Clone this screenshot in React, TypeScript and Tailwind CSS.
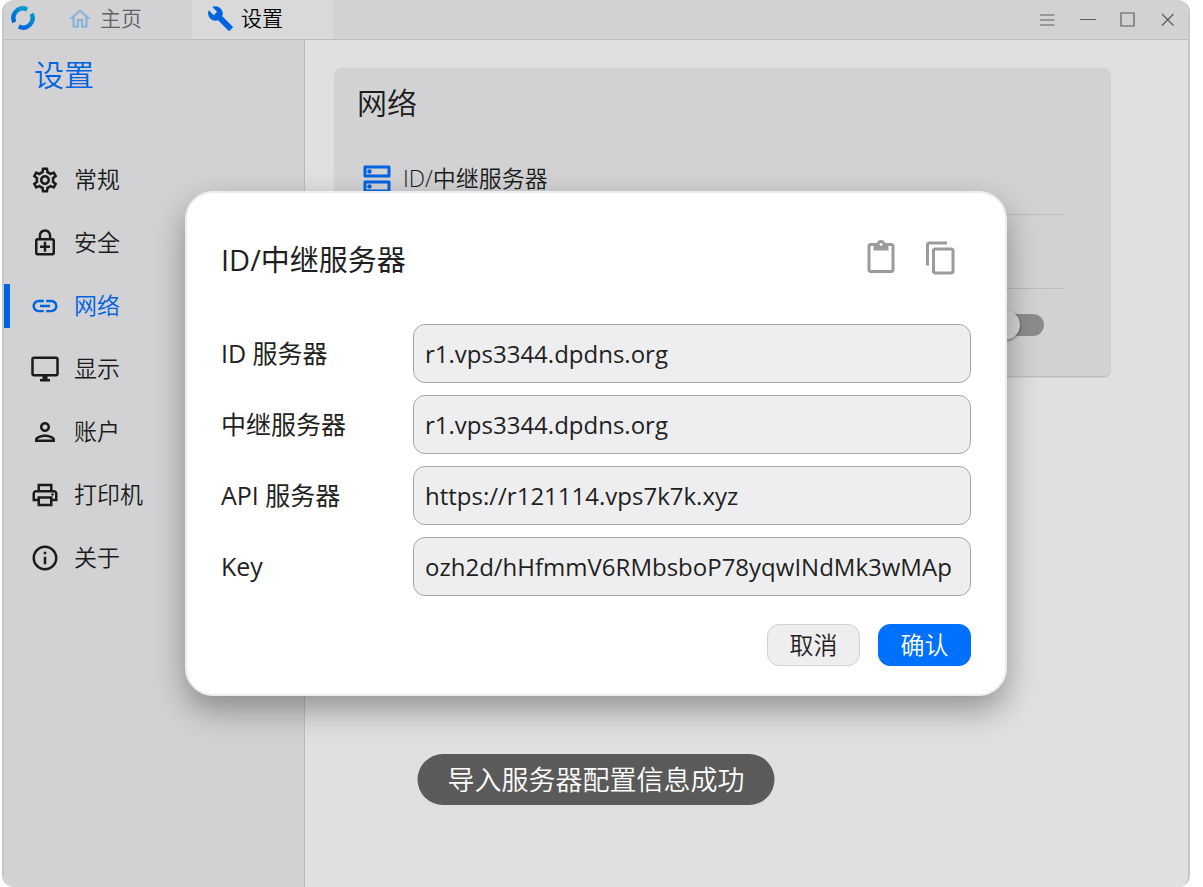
import { useState } from "react";
import type { IconType } from "react-icons";
import {
  MdBuild,
  MdContentCopy,
  MdContentPaste,
  MdLink,
  MdOutlineDesktopWindows,
  MdOutlineDns,
  MdOutlineEnhancedEncryption,
  MdOutlineHome,
  MdOutlineInfo,
  MdOutlinePerson,
  MdOutlinePrint,
  MdOutlineSettings,
} from "react-icons/md";

const menuItems: { key: string; label: string; icon: IconType }[] = [
  { key: "general", label: "常规", icon: MdOutlineSettings },
  { key: "security", label: "安全", icon: MdOutlineEnhancedEncryption },
  { key: "network", label: "网络", icon: MdLink },
  { key: "display", label: "显示", icon: MdOutlineDesktopWindows },
  { key: "account", label: "账户", icon: MdOutlinePerson },
  { key: "printer", label: "打印机", icon: MdOutlinePrint },
  { key: "about", label: "关于", icon: MdOutlineInfo },
];

const fields = [
  { key: "id", label: "ID 服务器" },
  { key: "relay", label: "中继服务器" },
  { key: "api", label: "API 服务器" },
  { key: "key", label: "Key" },
] as const;

type FieldKey = (typeof fields)[number]["key"];

function Logo() {
  return (
    <svg viewBox="0 0 24 24" className="size-6" fill="none" aria-hidden="true">
      <defs>
        <linearGradient id="ring" x1="20" y1="2" x2="6" y2="20" gradientUnits="userSpaceOnUse">
          <stop offset="0" stopColor="#00bfe0" />
          <stop offset="1" stopColor="#0071ff" />
        </linearGradient>
      </defs>
      <path d="M16.2 3.4A9.6 9.6 0 0 0 3.4 16.2" stroke="url(#ring)" strokeWidth="4.4" />
      <path d="M7.8 20.6A9.6 9.6 0 0 0 20.6 7.8" stroke="url(#ring)" strokeWidth="4.4" />
    </svg>
  );
}

function WindowButtons() {
  return (
    <div className="ml-auto flex items-center gap-4 pr-2 text-[#6a6a6a]">
      <button aria-label="菜单" className="flex size-6 items-center justify-center">
        <svg viewBox="0 0 16 16" className="size-4" stroke="currentColor" strokeWidth="1.2">
          <path d="M0 3h14.5M0 8h14.5M0 13h14.5" />
        </svg>
      </button>
      <button aria-label="最小化" className="flex size-6 items-center justify-center">
        <svg viewBox="0 0 16 16" className="size-4" stroke="currentColor" strokeWidth="1.2">
          <path d="M0 7.5h16" />
        </svg>
      </button>
      <button aria-label="最大化" className="flex size-6 items-center justify-center">
        <svg viewBox="0 0 16 16" className="size-4" fill="none" stroke="currentColor" strokeWidth="1.2">
          <path d="M1 1h13v13H1z" />
        </svg>
      </button>
      <button aria-label="关闭" className="flex size-6 items-center justify-center">
        <svg viewBox="0 0 16 16" className="size-4" stroke="currentColor" strokeWidth="1.3">
          <path d="M2 2l11.5 11.5M13.5 2L2 13.5" />
        </svg>
      </button>
    </div>
  );
}

export default function App() {
  const [active, setActive] = useState("network");
  const [websocket, setWebsocket] = useState(false);
  const [values, setValues] = useState<Record<FieldKey, string>>({
    id: "r1.vps3344.dpdns.org",
    relay: "r1.vps3344.dpdns.org",
    api: "https://r121114.vps7k7k.xyz",
    key: "ozh2d/hHfmmV6RMbsboP78yqwINdMk3wMAp",
  });

  return (
    <div className="flex min-h-screen bg-white pr-[13px] pl-[2px] font-['Open_Sans','Noto_Sans_CJK_SC',sans-serif] text-[#1f1f22]">
      <div className="relative flex flex-1 flex-col overflow-hidden rounded-xl border-x-2 border-[#c6c6c6] bg-white">
        {/* Title bar */}
        <header className="flex h-10 items-stretch border-b border-[#d6d6d6] bg-[#efeff2]">
          <div className="flex w-12 items-center pb-[3px] pl-[7px]">
            <Logo />
          </div>
          <nav className="flex text-[21px] font-[350]">
            <a href="#home" className="flex w-[140px] items-center gap-[7px] pb-[2px] pl-[15px] text-[#6f6f72]">
              <MdOutlineHome className="size-[26px] text-[#a0caf4]" />
              主页
            </a>
            <a href="#settings" className="flex w-[141px] items-center gap-[7px] bg-[#f8f8f8] pb-[2px] pl-[15px] text-black">
              <MdBuild className="size-[27px] text-[#0071ff]" />
              设置
            </a>
          </nav>
          <WindowButtons />
        </header>

        <div className="flex flex-1">
          {/* Sidebar */}
          <aside className="w-[301px] shrink-0 border-r border-[#d6d6d6] bg-[#efeff2]">
            <h1 className="px-[30px] pt-3 text-[30px] leading-[45px] font-[350] text-[#0071ff]">设置</h1>
            <nav className="mt-[51px]">
              {menuItems.map(({ key, label, icon: Icon }) => {
                const selected = key === active;
                return (
                  <button
                    key={key}
                    onClick={() => setActive(key)}
                    className={`flex h-[63px] w-full items-center text-[23px] font-[350] ${
                      selected ? "text-[#0071ff]" : ""
                    }`}
                  >
                    <span className={`h-11 w-1.5 ${selected ? "bg-[#0071ff]" : ""}`} />
                    <Icon className="mr-[14px] ml-5 size-[30px]" />
                    {label}
                  </button>
                );
              })}
            </nav>
          </aside>

          {/* Page */}
          <main className="flex-1 pt-7 pr-[78px] pl-[30px]">
            <section className="rounded-md bg-[#efeff2] px-[22px] pb-[15px] shadow-[0_1px_2px_rgba(0,0,0,0.22)]">
              <h2 className="pt-3 text-[30px] leading-[45px] font-[350]">网络</h2>
              <div className="mt-[18px] mr-6 ml-[2px] divide-y divide-[#d6d6d6]">
                <button className="flex h-[72px] w-full items-center gap-2 text-[23px] font-[350]">
                  <MdOutlineDns className="size-9 text-[#0071ff]" />
                  ID/中继服务器
                </button>
                <div className="h-[74px]" />
                <div className="flex h-[72px] items-center justify-end pr-5">
                  <input
                    type="checkbox"
                    role="switch"
                    aria-label="WebSocket"
                    checked={websocket}
                    onChange={(e) => setWebsocket(e.target.checked)}
                    className="relative h-[22px] w-[51px] appearance-none rounded-full bg-[#a0a0a1] before:absolute before:-top-1 before:-left-[3px] before:size-[30px] before:rounded-full before:bg-[#f4f4f4] before:shadow-[0_1px_3px_rgba(0,0,0,0.5)] checked:bg-[#80b8ff] checked:before:left-6 checked:before:bg-[#0071ff]"
                  />
                </div>
              </div>
            </section>
          </main>
        </div>

        {/* Dialog */}
        <div className="absolute inset-0 flex items-center justify-center bg-black/12">
          <div
            role="dialog"
            aria-labelledby="dialog-title"
            className="w-full max-w-[822px] rounded-[28px] border-2 border-[#ececee] bg-white px-[34px] pt-[35px] pb-7 shadow-[0_14px_32px_rgba(0,0,0,0.34)]"
          >
            <div className="flex items-center justify-between">
              <h2 id="dialog-title" className="pt-1 text-[29px] leading-[56px]">
                ID/中继服务器
              </h2>
              <div className="flex text-[#9b9b9b]">
                <button aria-label="粘贴" className="p-3">
                  <MdContentPaste className="size-9" />
                </button>
                <button aria-label="复制" className="p-3">
                  <MdContentCopy className="size-9" />
                </button>
              </div>
            </div>

            <form className="mt-9">
              <div className="flex flex-col gap-3">
                {fields.map((f) => (
                  <div key={f.key} className="flex items-center">
                    <label htmlFor={f.key} className="w-48 shrink-0 text-[25px]">
                      {f.label}
                    </label>
                    <input
                      id={f.key}
                      type="text"
                      value={values[f.key]}
                      onChange={(e) => setValues({ ...values, [f.key]: e.target.value })}
                      className="h-[59px] min-w-0 flex-1 rounded-xl border border-[#a6a6a8] bg-[#eeeef0] px-[11px] text-[24px]"
                    />
                  </div>
                ))}
              </div>

              <div className="mt-7 flex justify-end gap-[18px] text-[24px] leading-[40px] font-[350]">
                <button type="button" className="w-[93px] rounded-xl border border-[#d2d2d4] bg-[#eeeef0]">
                  取消
                </button>
                <button type="button" className="w-[93px] rounded-xl border border-[#0071ff] bg-[#0071ff] text-white">
                  确认
                </button>
              </div>
            </form>
          </div>
        </div>

        {/* Toast */}
        <div
          role="status"
          className="absolute bottom-[82px] left-1/2 -translate-x-1/2 rounded-full bg-[#5a5a5a] px-[30px] text-[27px] leading-[51px] font-[350] whitespace-nowrap text-white"
        >
          导入服务器配置信息成功
        </div>
      </div>
    </div>
  );
}
